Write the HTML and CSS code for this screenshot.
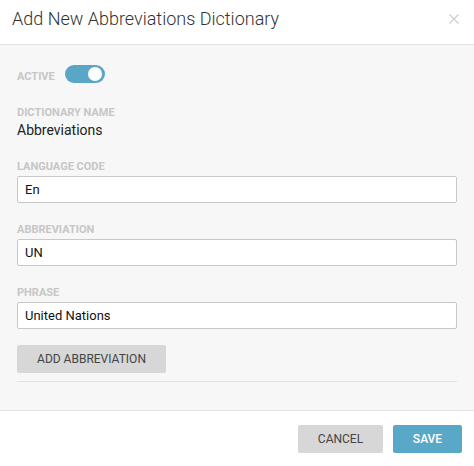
FILE: index.html
```html
<!DOCTYPE html>
<html>
<head>
<meta charset="utf-8">
<link rel="stylesheet" href="styles.css">
</head>
<body>
<div class="modal">
  <div class="header">
    <h1 class="title">Add New Abbreviations Dictionary</h1>
    <svg class="close" width="10" height="10" viewBox="0 0 10 10"><path d="M0.5 0.5 L9.5 9.5 M9.5 0.5 L0.5 9.5" stroke="#cfcfcf" stroke-width="1.3" fill="none"/></svg>
  </div>
  <div class="content">
    <div class="active-row">
      <span class="label">Active</span>
      <span class="toggle"><span class="knob"></span></span>
    </div>
    <div class="label dict-label">Dictionary Name</div>
    <div class="value">Abbreviations</div>
    <div class="field">
      <div class="label">Language Code</div>
      <div class="input">En</div>
    </div>
    <div class="field">
      <div class="label">Abbreviation</div>
      <div class="input">UN</div>
    </div>
    <div class="field">
      <div class="label">Phrase</div>
      <div class="input">United Nations</div>
    </div>
    <button class="btn btn-gray add">Add Abbreviation</button>
    <div class="rule"></div>
  </div>
  <div class="footer">
    <button class="btn btn-gray cancel">Cancel</button>
    <button class="btn btn-blue save">Save</button>
  </div>
</div>
</body>
</html>
```
FILE: styles.css
```css
html, body {
  margin: 0;
  padding: 0;
  background: #ffffff;
  font-family: Roboto, "Liberation Sans", sans-serif;
}
.modal {
  width: 474px;
  height: 466px;
  display: flex;
  flex-direction: column;
}
.header {
  height: 44px;
  border-bottom: 1px solid #e3e3e3;
  display: flex;
  align-items: center;
  justify-content: space-between;
  padding: 0 15px 0 12px;
  box-sizing: content-box;
}
.title {
  margin: 0;
  font-size: 18px;
  font-weight: 300;
  color: #333;
  line-height: 20px;
  margin-top: -6px;
}
.close {
  margin-top: -6px;
  display: block;
}
.content {
  background: #f7f7f7;
  padding: 20px 17px 0 17px;
  height: 345px;
  border-bottom: 1px solid #e3e3e3;
  box-sizing: content-box;
}
.label {
  font-size: 11px;
  font-weight: 700;
  color: #c6c6c6;
  text-transform: uppercase;
  line-height: 13px;
}
.active-row {
  display: flex;
  align-items: center;
  gap: 10px;
  height: 18px;
}
.active-row .label {
  margin-top: 4px;
}
.toggle {
  width: 40px;
  height: 18px;
  border-radius: 9px;
  background: #5aa6c7;
  position: relative;
  display: inline-block;
}
.knob {
  position: absolute;
  right: 3px;
  top: 2px;
  width: 14px;
  height: 14px;
  border-radius: 50%;
  background: #fff;
}
.dict-label {
  margin-top: 23px;
}
.value {
  font-size: 14px;
  color: #222;
  line-height: 18px;
  margin-top: 2px;
}
.field {
  margin-top: 21px;
}
.field + .field {
  margin-top: 20px;
}
.input {
  margin-top: 3px;
  height: 27px;
  box-sizing: border-box;
  border: 1px solid #c8c8c8;
  border-radius: 2px;
  background: #fff;
  font-size: 13px;
  color: #111;
  padding: 0 7px;
  line-height: 25px;
}
.btn {
  border: none;
  border-radius: 2px;
  font-family: Roboto, "Liberation Sans", sans-serif;
  font-size: 12px;
  text-transform: uppercase;
  height: 28px;
  padding: 0;
  cursor: pointer;
}
.btn-gray {
  background: #d7d7d7;
  color: #444;
}
.btn-blue {
  background: #5aa8c8;
  color: #fff;
  font-weight: 500;
}
.add {
  margin-top: 16px;
  width: 149px;
  display: block;
}
.rule {
  margin-top: 8px;
  height: 1px;
  background: #e2e2e2;
}
.footer {
  flex: 1;
  display: flex;
  justify-content: flex-end;
  gap: 10px;
  padding: 14px 12px 0 0;
}
.cancel {
  width: 85px;
}
.save {
  width: 69px;
}
```
